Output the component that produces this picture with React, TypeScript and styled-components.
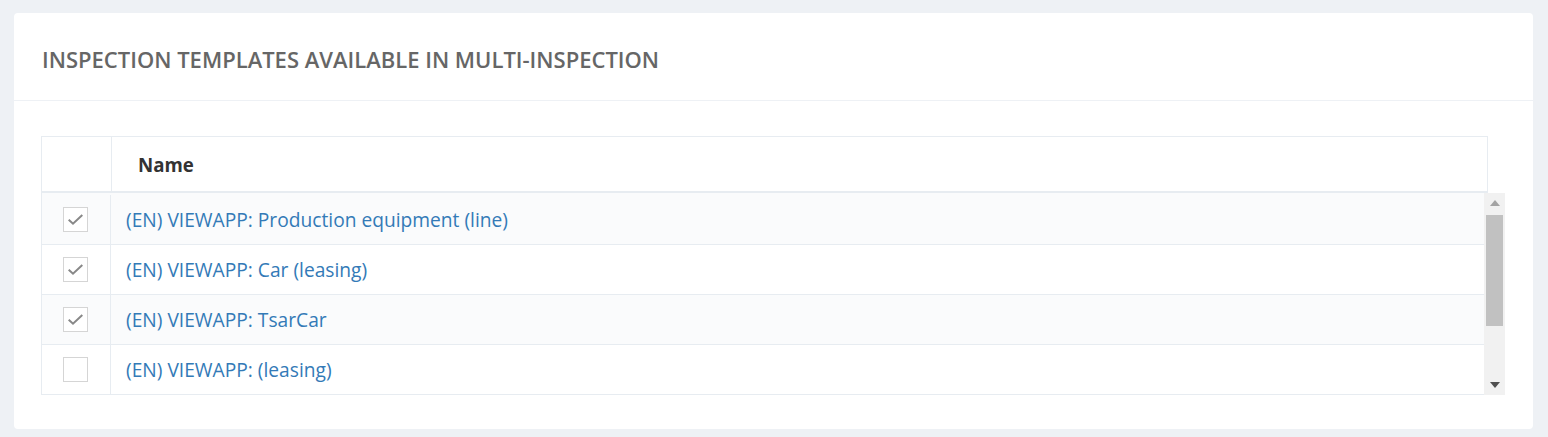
import React from "react";
import styled, { createGlobalStyle } from "styled-components";

const Global = createGlobalStyle`
  html, body { margin: 0; padding: 0; background: #eef1f5; }
  body { font-family: "Open Sans", "Liberation Sans", sans-serif; }
  * { box-sizing: border-box; }
`;

const Page = styled.div`
  padding: 13px 15px 8px 14px;
`;

const Card = styled.section`
  background: #fff;
  border-radius: 4px;
  height: 416px;
  display: flex;
  flex-direction: column;
`;

const CardHeader = styled.header`
  height: 88px;
  border-bottom: 1px solid #eef1f5;
  display: flex;
  align-items: center;
  padding: 5px 28px 0;
`;

const Title = styled.h2`
  margin: 0;
  font-size: 22px;
  font-weight: 600;
  color: #666;
  text-transform: uppercase;
  letter-spacing: 0;
`;

const CardBody = styled.div`
  padding: 35px 28px 0 27px;
`;

const HeadRow = styled.div`
  display: flex;
  width: 1447px;
  height: 57px;
  border: 1px solid #e7ecf1;
  border-bottom: 2px solid #e7ecf1;
`;

const HeadCheckCell = styled.div`
  width: 70px;
  border-right: 1px solid #e7ecf1;
`;

const HeadNameCell = styled.div`
  flex: 1;
  display: flex;
  align-items: center;
  padding-left: 26px;
  padding-top: 1px;
  font-size: 18.7px;
  font-weight: 700;
  color: #333;
`;

const BodyWrap = styled.div`
  display: flex;
  height: 202px;
`;

const Rows = styled.div`
  flex: 1;
  overflow: hidden;
  padding-top: 2px;
  background: #fafbfc;
  border-left: 1px solid #e7ecf1;
`;

const Row = styled.div<{ $striped: boolean }>`
  display: flex;
  height: 50px;
  border-bottom: 1px solid #e7ecf1;
  background: ${(p) => (p.$striped ? "#fafbfc" : "#fff")};
`;

const CheckCell = styled.div`
  width: 69px;
  border-right: 1px solid #e7ecf1;
  display: flex;
  align-items: center;
  justify-content: center;
  padding-right: 1px;
`;

const Box = styled.span`
  width: 25px;
  height: 25px;
  border: 1px solid #d5d5d5;
  background: #fff;
  display: flex;
  align-items: center;
  justify-content: center;
`;

const NameCell = styled.div`
  flex: 1;
  display: flex;
  align-items: center;
  padding-left: 15px;
`;

const Link = styled.a`
  font-size: 19.2px;
  color: #337ab7;
  text-decoration: none;
`;

const Scrollbar = styled.div`
  width: 21px;
  background: #f1f1f1;
  display: flex;
  flex-direction: column;
  align-items: center;
`;

const Arrow = styled.div`
  height: 20px;
  width: 100%;
  display: flex;
  align-items: center;
  justify-content: center;
`;

const Track = styled.div`
  flex: 1;
  width: 100%;
  padding: 2px 2px 0;
`;

const Thumb = styled.div`
  height: 111px;
  background: #c1c1c1;
`;

const items = [
  { name: "(EN) VIEWAPP: Production equipment (line)", checked: true },
  { name: "(EN) VIEWAPP: Car (leasing)", checked: true },
  { name: "(EN) VIEWAPP: TsarCar", checked: true },
  { name: "(EN) VIEWAPP: (leasing)", checked: false },
];

const Check = () => (
  <svg width="23" height="23" viewBox="0 0 23 23">
    <path d="M4.7 11.7 L9 15.7 L18.3 7" fill="none" stroke="#888" strokeWidth="2" />
  </svg>
);

export default function App() {
  return (
    <>
      <Global />
      <Page>
        <Card>
          <CardHeader>
            <Title>Inspection templates available in multi-inspection</Title>
          </CardHeader>
          <CardBody>
            <HeadRow>
              <HeadCheckCell />
              <HeadNameCell>Name</HeadNameCell>
            </HeadRow>
            <BodyWrap>
              <Rows>
                {items.map((it, i) => (
                  <Row key={i} $striped={i % 2 === 0}>
                    <CheckCell>
                      <Box>{it.checked && <Check />}</Box>
                    </CheckCell>
                    <NameCell>
                      <Link href="#">{it.name}</Link>
                    </NameCell>
                  </Row>
                ))}
              </Rows>
              <Scrollbar>
                <Arrow>
                  <svg width="10" height="6" viewBox="0 0 10 6">
                    <path d="M0 6 L5 0 L10 6 Z" fill="#a3a3a3" />
                  </svg>
                </Arrow>
                <Track>
                  <Thumb />
                </Track>
                <Arrow>
                  <svg width="10" height="6" viewBox="0 0 10 6">
                    <path d="M0 0 L10 0 L5 6 Z" fill="#505050" />
                  </svg>
                </Arrow>
              </Scrollbar>
            </BodyWrap>
          </CardBody>
        </Card>
      </Page>
    </>
  );
}
